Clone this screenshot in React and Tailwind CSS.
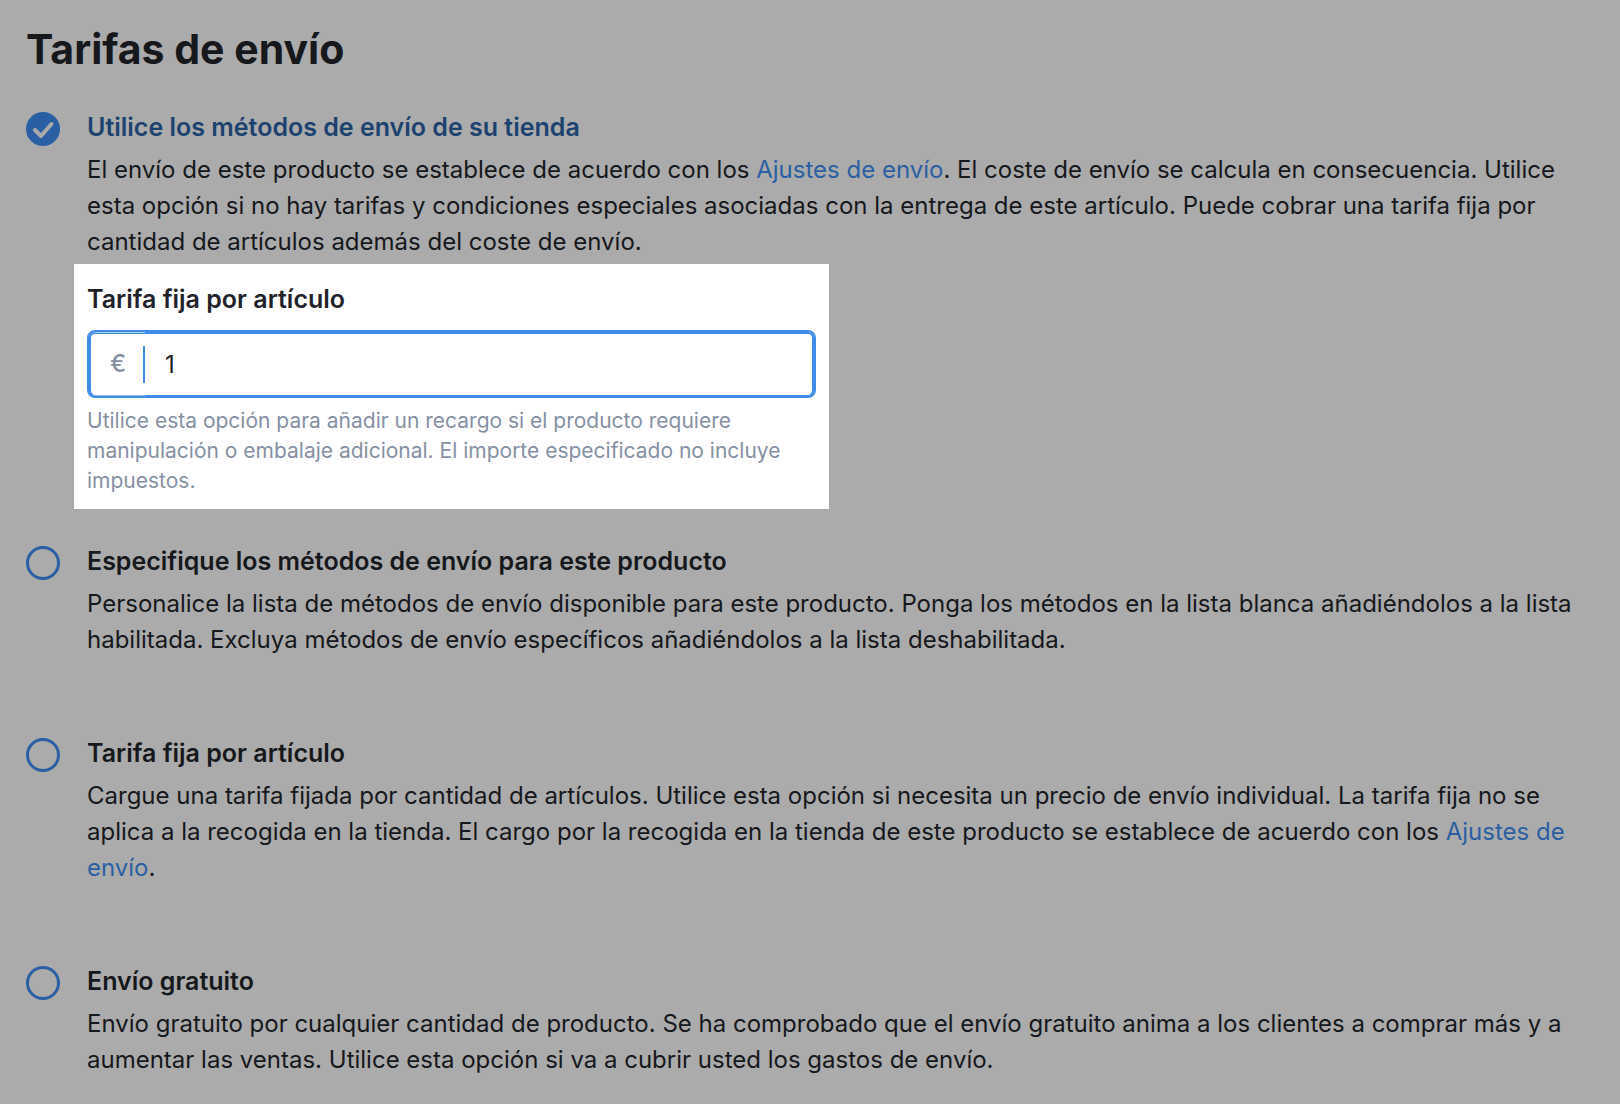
import React, { useState } from "react";

const SettingsLink = () => (
  <a href="#ajustes-de-envio" className="text-[#2a60a3]">
    Ajustes de envío
  </a>
);

const ShippingOption = ({ id, title, checked, onSelect, description, children }) => (
  <div className="flex items-start gap-[27px]">
    <div className="relative mt-[3px] h-[34px] w-[34px] shrink-0">
      <input
        type="radio"
        id={id}
        name="shipping-rate"
        checked={checked}
        onChange={() => onSelect(id)}
        className="block h-[34px] w-[34px] appearance-none rounded-full border-[3px] border-[#2a60a3] checked:bg-[#2a60a3]"
      />
      {checked && (
        <svg
          viewBox="0 0 34 34"
          className="pointer-events-none absolute inset-0 h-[34px] w-[34px]"
          fill="none"
          stroke="#ababab"
          strokeWidth="4"
          strokeLinecap="round"
          strokeLinejoin="round"
        >
          <path d="M9 18l6 6L25.500 12" />
        </svg>
      )}
    </div>
    <div className="min-w-0 flex-1">
      <label
        htmlFor={id}
        className={`block text-[25px]/9 font-semibold ${checked ? "text-[#1c4270]" : "text-[#16181c]"}`}
      >
        {title}
      </label>
      <p className="mt-[7px] text-2xl/9">{description}</p>
      {children}
    </div>
  </div>
);

const SurchargeField = () => {
  const [amount, setAmount] = useState("1");

  return (
    <div className="mt-1 -ml-[13px] w-full max-w-[755px] bg-white px-[13px] pt-[17px] pb-[13px]">
      <label htmlFor="surcharge" className="block text-[25px]/9 font-semibold text-[#1f222a]">
        Tarifa fija por artículo
      </label>
      <div className="mt-[13px] flex h-[68px] rounded-lg border-2 border-[#3e8ce8]">
        <span className="flex w-14 items-center rounded-l-md shadow-[inset_2px_0_#3e8ce8,inset_0_1px_#b5d3f6,inset_0_2px_#3e8ce8,inset_0_-1px_#8fbcf0]">
          <span className="flex h-[37px] w-full items-center justify-center border-r-2 border-[#3e8ce8] pl-1 text-2xl font-medium text-[#8591a3]">
            €
          </span>
        </span>
        <input
          id="surcharge"
          type="text"
          value={amount}
          onChange={(e) => setAmount(e.target.value)}
          className="min-w-0 flex-1 rounded-r-md border-t-2 border-r-2 border-b border-[#3e8ce8] px-5 text-2xl text-[#1f222a] outline-none"
        />
      </div>
      <p className="mt-2 text-[21px]/[30px] text-[#8591a3]">
        Utilice esta opción para añadir un recargo si el producto requiere manipulación o embalaje
        adicional. El importe especificado no incluye impuestos.
      </p>
    </div>
  );
};

const App = () => {
  const [selected, setSelected] = useState("store");

  return (
    <main className="min-h-screen bg-[#ababab] px-[26px] pt-5 pb-6 font-['Inter',sans-serif] text-[#16181c]">
      <h1 className="text-[41px]/[58px] font-bold">Tarifas de envío</h1>

      <div className="mt-[31px]">
        <ShippingOption
          id="store"
          title="Utilice los métodos de envío de su tienda"
          checked={selected === "store"}
          onSelect={setSelected}
          description={
            <>
              El envío de este producto se establece de acuerdo con los <SettingsLink />. El coste
              de envío se calcula en consecuencia. Utilice esta opción si no hay tarifas y
              condiciones especiales asociadas con la entrega de este artículo. Puede cobrar una
              tarifa fija por cantidad de artículos además del coste de envío.
            </>
          }
        >
          <SurchargeField />
        </ShippingOption>
      </div>

      <div className="mt-[34px] flex flex-col gap-[77px]">
        <ShippingOption
          id="custom"
          title="Especifique los métodos de envío para este producto"
          checked={selected === "custom"}
          onSelect={setSelected}
          description="Personalice la lista de métodos de envío disponible para este producto. Ponga los métodos en la lista blanca añadiéndolos a la lista habilitada. Excluya métodos de envío específicos añadiéndolos a la lista deshabilitada."
        />
        <ShippingOption
          id="flat"
          title="Tarifa fija por artículo"
          checked={selected === "flat"}
          onSelect={setSelected}
          description={
            <>
              Cargue una tarifa fijada por cantidad de artículos. Utilice esta opción si necesita un
              precio de envío individual. La tarifa fija no se aplica a la recogida en la tienda. El
              cargo por la recogida en la tienda de este producto se establece de acuerdo con los{" "}
              <SettingsLink />.
            </>
          }
        />
        <ShippingOption
          id="free"
          title="Envío gratuito"
          checked={selected === "free"}
          onSelect={setSelected}
          description="Envío gratuito por cualquier cantidad de producto. Se ha comprobado que el envío gratuito anima a los clientes a comprar más y a aumentar las ventas. Utilice esta opción si va a cubrir usted los gastos de envío."
        />
      </div>
    </main>
  );
};

export default App;
